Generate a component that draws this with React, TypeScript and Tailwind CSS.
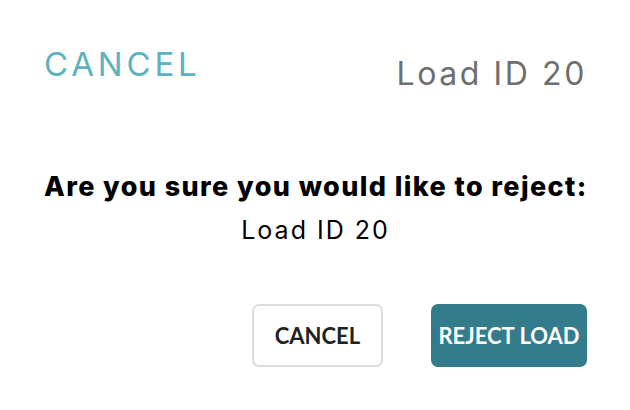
export default function App() {
  return (
    <div className="w-[630px] h-[410px] bg-white flex flex-col pl-[44px] pr-[43px] font-['Inter',sans-serif]">
      <div className="flex justify-between items-start pt-[44px]">
        <button className="text-[33px] leading-[40px] text-[#5bb3bf] tracking-[3.8px]">
          CANCEL
        </button>
        <div className="text-[32px] leading-[40px] mt-[10px] text-[#6e6e6e] tracking-[2.6px]">
          Load ID 20
        </div>
      </div>
      <div className="mt-[77px] text-center text-[27px] leading-[32px] font-extrabold text-black tracking-[1.4px] whitespace-nowrap">
        Are you sure you would like to reject:
      </div>
      <div className="mt-[12px] text-center text-[25px] leading-[30px] text-black tracking-[2px]">
        Load ID 20
      </div>
      <div className="mt-[59px] flex justify-end gap-[48px] font-['Lato',sans-serif]">
        <button className="w-[131px] h-[63px] rounded-[7px] border-2 border-[#dcdcdc] bg-white text-[22px] font-bold text-[#222]">
          CANCEL
        </button>
        <button className="w-[156px] h-[63px] rounded-[7px] bg-[#347b8b] text-[22px] font-bold text-white">
          REJECT LOAD
        </button>
      </div>
    </div>
  );
}
